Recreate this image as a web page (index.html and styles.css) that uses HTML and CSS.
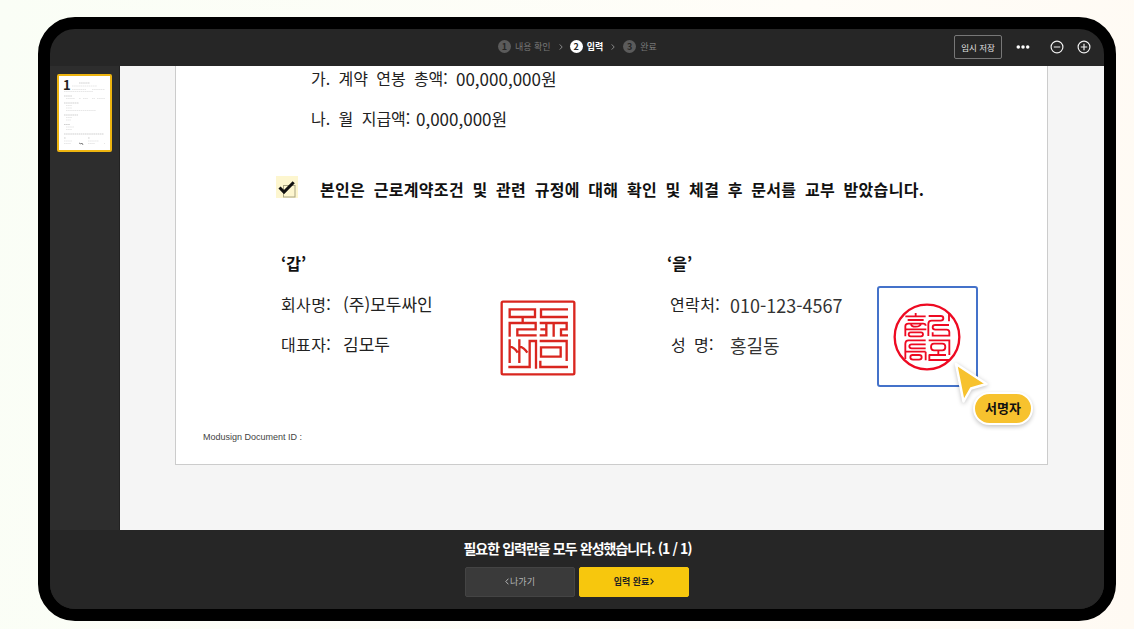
FILE: index.html
```html
<!DOCTYPE html>
<html lang="ko">
<head>
<meta charset="utf-8">
<title>Modusign</title>
<link rel="stylesheet" href="styles.css">
</head>
<body>
<div class="device">
  <header class="topbar">
    <ol class="steps">
      <li class="step"><span class="num">1</span>내용 확인</li>
      <li class="sep"><svg width="4" height="6" viewBox="0 0 4 6"><path d="M.7.4 3.2 3 .7 5.6"/></svg></li>
      <li class="step active"><span class="num">2</span>입력</li>
      <li class="sep"><svg width="4" height="6" viewBox="0 0 4 6"><path d="M.7.4 3.2 3 .7 5.6"/></svg></li>
      <li class="step"><span class="num">3</span>완료</li>
    </ol>
    <div class="tools">
      <button class="save">임시 저장</button>
      <svg class="more" width="14" height="4" viewBox="0 0 14 4"><circle cx="2.3" cy="2" r="1.75"/><circle cx="7" cy="2" r="1.75"/><circle cx="11.7" cy="2" r="1.75"/></svg>
      <svg class="zoom" width="14" height="14" viewBox="0 0 14 14"><circle cx="7" cy="7" r="5.9"/><path d="M3.8 7h6.4"/></svg>
      <svg class="zoom" width="14" height="14" viewBox="0 0 14 14"><circle cx="7" cy="7" r="5.9"/><path d="M3.8 7h6.4M7 3.8v6.4"/></svg>
    </div>
  </header>
  <main class="work">
    <aside class="pages">
      <div class="thumb">
        <b class="page-no">1</b>
        <svg class="mini" width="51" height="74" viewBox="0 0 51 74">
          <path class="dark" d="M20 7h11M5 20h8M5 27h15M5 39h14M5 48.500h6M5 58h40M5 62h2M29 62h2"/>
          <path d="M13 10h25M13 13.500h14M33 13.500h13M5 15.500h29M7 22.500h9M20 22.500h2M24 22.500h5M33 22.500h3M38 22.500h8M7 29.500h6M7 32h6M7 34.500h30M7 41.500h6M7 44h5M7 51h8M7 53.500h6M5 65h8M5 67.500h7M29 65h11M29 67.500h7M45 67.500h1"/>
          <path class="mark" d="M20 67l2 1 1-1 1 2"/>
        </svg>
      </div>
    </aside>
    <section class="canvas">
      <article class="sheet">
        <p class="line"><span class="pay-a">가. 계약 연봉 총액:</span><span class="value">00,000,000원</span></p>
        <p class="line"><span class="pay-b">나. 월 지급액:</span><span class="value">0,000,000원</span></p>
        <div class="agree">
          <svg class="check" width="22" height="22" viewBox="0 0 22 22"><rect class="field" width="22" height="22"/><rect class="box" x="7.500" y="9.500" width="11.500" height="11.500"/><path d="M3.500 11.500 8 16 17.700 6.200"/></svg>
          <strong>본인은 근로계약조건 및 관련 규정에 대해 확인 및 체결 후 문서를 교부 받았습니다.</strong>
        </div>
        <div class="parties">
          <section class="party">
            <h2>‘갑’</h2>
            <dl><dt>회사명:</dt><dd>(주)모두싸인</dd><dt>대표자:</dt><dd>김모두</dd></dl>
          </section>
          <svg class="seal" width="76" height="76" viewBox="29 29 228 228">
            <rect x="34" y="34" width="218" height="218" rx="4"/>
            <path d="M58 57H134V80H58ZM97 80V98M58 139V98H136V117H81V135H139M233 57H152V80H233M148 98H229V117H212V135H233M168 98V117H150M148 135H168V117M190 98V139M58 147V218M58 168Q74 172 82 187M87 147V218M87 168Q102 172 111 187M137 235V152H118V230H54M148 152H229V212M152 171H211V199H152ZM150 211V230H233"/>
          </svg>
          <section class="party second">
            <h2>‘을’</h2>
            <dl><dt>연락처:</dt><dd>010-123-4567</dd><dt class="name">성 명:</dt><dd>홍길동</dd></dl>
          </section>
          <div class="signature">
            <svg class="stamp" width="68" height="68" viewBox="84 84 204 204">
              <circle class="ring" cx="186" cy="186" r="97"/>
              <path d="M152 114V124M121 124H182M128 135H176M121 184V154Q121 146 130 146H174Q182 146 182 152M138 146Q138 155 152 155T168 146M121 163H184M137 184Q131 184 131 178T137 172H168Q174 172 174 178T168 184ZM191 123H227Q235 123 235 130T227 137H200Q190 137 190 147V183M252 114V139M252 150H211Q203 150 203 157T211 164H245Q253 164 253 172V182H203V172M121 252V206Q121 196 131 196H182M182 208H140Q133 208 133 214T140 220H182M121 230H182M143 240H162Q170 240 170 247T162 254H144Q136 254 136 247T143 240ZM182 230V256M191 196H253V240M207 206H232Q241 206 241 216T232 226H207Q198 226 198 216T207 206ZM220 226V240M191 240H243M193 240V255H253"/>
            </svg>
            <svg class="cursor" width="44" height="50" viewBox="0 0 44 50"><path d="M7 6 37.500 26 22 30.500 14.500 43.500Z"/></svg>
            <span class="signer">서명자</span>
          </div>
        </div>
        <p class="doc-id">Modusign Document ID :</p>
      </article>
    </section>
  </main>
  <footer class="bottom">
    <p class="message">필요한 입력란을 모두 완성했습니다. (1 / 1)</p>
    <div class="actions">
      <button class="leave"><svg width="4" height="7" viewBox="0 0 4 7"><path d="M3.400.7.8 3.500l2.600 2.800"/></svg>나가기</button>
      <button class="done">입력 완료<svg width="4" height="7" viewBox="0 0 4 7"><path d="M.6.7l2.600 2.800L.6 6.300"/></svg></button>
    </div>
  </footer>
</div>
</body>
</html>
```

FILE: styles.css
```css
* { box-sizing: border-box; }
body {
  margin: 0;
  width: 1134px;
  height: 629px;
  padding: 17px 18px 8px 38px;
  overflow: hidden;
  background: linear-gradient(100deg, #fafef6, #fffdf8 65%, #fffaf3);
  font-family: "Noto Sans CJK KR", sans-serif;
  color: #222;
}
p, h2, dl, dd, ol { margin: 0; padding: 0; }
svg { display: block; fill: none; flex: none; }
button { font-family: inherit; padding: 0; }
.device {
  width: 1078px;
  height: 604px;
  border: 12px solid #000;
  border-radius: 37px;
  background: #262626;
  overflow: hidden;
  display: flex;
  flex-direction: column;
}
.topbar {
  height: 37px;
  flex: none;
  display: grid;
  grid-template-columns: 448px 1fr auto;
  align-items: start;
}
.steps {
  grid-column: 2;
  display: flex;
  align-items: center;
  list-style: none;
  height: 35px;
}
.step {
  display: flex;
  align-items: center;
  gap: 4px;
  font-size: 9px;
  line-height: 14px;
  color: #777;
}
.num {
  width: 13px;
  height: 13px;
  border-radius: 50%;
  background: #5b5b5b;
  color: #262626;
  font-weight: 700;
  line-height: 13px;
  text-align: center;
}
.active { color: #fff; font-weight: 700; }
.active .num { background: #fff; }
.sep { margin: 0 7px 0 8px; }
.active + .sep { margin-right: 8px; }
.sep path { stroke: #888; }
.tools { display: flex; align-items: center; padding-right: 13px; height: 35px; }
.save {
  width: 48px;
  height: 24px;
  border: 1px solid #777;
  border-radius: 2px;
  background: none;
  color: #e0e0e0;
  font-size: 8.500px;
  line-height: 20px;
}
.more { margin: 0 20px 0 14px; fill: #fff; }
.zoom { stroke: #eee; stroke-width: 1.2; }
.zoom + .zoom { margin-left: 13px; }
.work { height: 464px; flex: none; display: flex; }
.pages { width: 70px; flex: none; background: #2d2d2d; padding: 8px 0 0 7px; border-right: 1px solid #222; }
.thumb {
  width: 55px;
  height: 78px;
  border: 2px solid #edb410;
  border-radius: 2px;
  background: #fff;
  display: grid;
}
.page-no, .mini { grid-area: 1 / 1; }
.page-no { font-size: 13px; line-height: 17px; padding-left: 4px; color: #222; }
.mini path { stroke: #ddd; stroke-width: .7; stroke-dasharray: 1.6 .5; }
.mini .dark { stroke: #bbb; }
.mini .mark { stroke: #555; stroke-dasharray: none; }
.canvas { flex: 1; background: #f5f5f5; padding-left: 55px; }
.sheet {
  width: 873px;
  height: 399px;
  border: 1px solid #ccc;
  border-top: 0;
  background: #fff;
}
.line { height: 24px; margin-bottom: 16px; padding-left: 135px; font-size: 16px; line-height: 24px; display: flex; }
.value { font-size: 17px; line-height: 25px; }
.pay-a { width: 145px; word-spacing: 3.800px; white-space: nowrap; }
.pay-b { width: 105px; word-spacing: 3.900px; white-space: nowrap; }
.agree { display: flex; align-items: center; height: 24px; margin: 47px 0 0 100px; gap: 22px; font-size: 16px; }
.agree strong { font-weight: 700; color: #111; letter-spacing: .33px; word-spacing: 3.700px; white-space: nowrap; line-height: 24px; }
.check { margin-top: -4px; }
.check .field { fill: #fdf6cf; }
.check .box { stroke: #a9a483; }
.check path { stroke: #111; stroke-width: 3; }
.parties { display: grid; grid-template-columns: 219px 167px 210px 101px; margin: 50px 0 0 105px; height: 134px; }
.party h2 { font-size: 16px; line-height: 24px; height: 24px; font-weight: 700; color: #111; }
.party dl { display: grid; grid-template-columns: 62px 1fr; grid-auto-rows: 24px; row-gap: 16px; margin-top: 17px; font-size: 16px; line-height: 24px; white-space: nowrap; }
.party dt { letter-spacing: .4px; }
.party dd { font-size: 17px; }
.second dl { grid-template-columns: 60px 1fr; padding-left: 3px; }
.second dd { font-size: 18px; line-height: 26px; color: #333; }
.second .name { padding-left: 1px; word-spacing: 3px; }
.seal { margin-top: 49px; stroke: #d9261f; stroke-width: 7; }
.signature {
  position: relative;
  width: 101px;
  height: 101px;
  margin-top: 35px;
  border: 2px solid #4472ca;
  border-radius: 3px;
  display: grid;
  place-items: center;
  stroke: #ee0a22;
  stroke-width: 5.500;
}
.stamp { margin-right: 2px; }
.signature .ring { stroke-width: 7; }
.signature .cursor { position: absolute; left: 70px; top: 70px; overflow: visible; fill: #f7c22e; stroke: #fff; stroke-width: 2.500; stroke-linejoin: round; filter: drop-shadow(0 1px 2px rgba(0,0,0,.25)); }
.signer {
  position: absolute;
  left: 94px;
  top: 104px;
  width: 60px;
  height: 33px;
  border: 2px solid #fff;
  border-radius: 17px;
  background: #f7c22e;
  box-shadow: 0 2px 4px rgba(0,0,0,.22);
  color: #111;
  font-size: 13px;
  font-weight: 700;
  line-height: 28px;
  text-align: center;
}
.doc-id { margin: 42px 0 0 27px; font-family: "Liberation Sans", sans-serif; font-size: 9px; line-height: 20px; color: #444; }
.bottom { flex: 1; background: #262626; display: flex; flex-direction: column; align-items: center; }
.message { font-size: 14px; font-weight: 700; line-height: 20px; letter-spacing: -1px; word-spacing: .2px; margin: 8px 0 0 1px; color: #fff; }
.actions { display: flex; gap: 4px; margin-top: 9px; }
.actions button {
  width: 110px;
  height: 30px;
  border: 1px solid #444;
  border-radius: 2px;
  display: flex;
  align-items: center;
  justify-content: center;
  gap: 1px;
  padding-bottom: 2px;
  font-size: 9px;
}
.leave { background: #3a3a3a; color: #b5b5b5; }
.leave path { stroke: #b5b5b5; }
.actions .done { background: #f7c70d; border-color: #f7c70d; color: #222; font-weight: 700; }
.done path { stroke: #222; stroke-width: 1.200; }
```
